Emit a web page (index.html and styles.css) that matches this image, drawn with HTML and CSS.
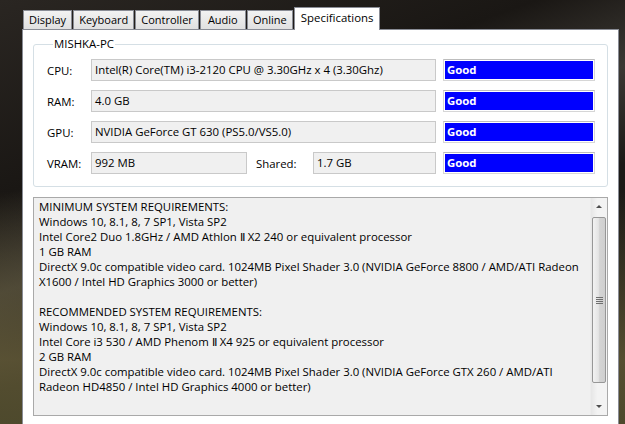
FILE: index.html
```html
<!DOCTYPE html>
<html lang="en">
<head>
  <meta charset="UTF-8" />
  <title>Specifications</title>
  <link rel="stylesheet" href="styles.css">
</head>
<body>

  <div class="window">
    <div class="tabs">
      <div class="tab">Display</div>
      <div class="tab">Keyboard</div>
      <div class="tab">Controller</div>
      <div class="tab">Audio</div>
      <div class="tab">Online</div>
      <div class="tab active">Specifications</div>
    </div>

    <div class="panel">
      <fieldset class="group">
        <legend>MISHKA-PC</legend>

        <div class="row">
          <span class="label">CPU:</span>
          <div class="field wide">Intel(R) Core(TM) i3-2120 CPU @ 3.30GHz x 4 (3.30Ghz)</div>
          <div class="rating">Good</div>
        </div>

        <div class="row">
          <span class="label">RAM:</span>
          <div class="field wide">4.0 GB</div>
          <div class="rating">Good</div>
        </div>

        <div class="row">
          <span class="label">GPU:</span>
          <div class="field wide">NVIDIA GeForce GT 630 (PS5.0/VS5.0)</div>
          <div class="rating">Good</div>
        </div>

        <div class="row">
          <span class="label">VRAM:</span>
          <div class="field vram">992 MB</div>
          <span class="label shared">Shared:</span>
          <div class="field small">1.7 GB</div>
          <div class="rating">Good</div>
        </div>
      </fieldset>

      <div class="textbox">
        <div class="text">
          MINIMUM SYSTEM REQUIREMENTS:<br>
          Windows 10, 8.1, 8, 7 SP1, Vista SP2<br>
          Intel Core2 Duo 1.8GHz / AMD Athlon Ⅱ X2 240 or equivalent processor<br>
          1 GB RAM<br>
          DirectX 9.0c compatible video card. 1024MB Pixel Shader 3.0 (NVIDIA GeForce 8800 / AMD/ATI Radeon<br>
          X1600 / Intel HD Graphics 3000 or better)<br>
          <br>
          RECOMMENDED SYSTEM REQUIREMENTS:<br>
          Windows 10, 8.1, 8, 7 SP1, Vista SP2<br>
          Intel Core i3 530 / AMD Phenom Ⅱ X4 925 or equivalent processor<br>
          2 GB RAM<br>
          DirectX 9.0c compatible video card. 1024MB Pixel Shader 3.0 (NVIDIA GeForce GTX 260 / AMD/ATI<br>
          Radeon HD4850 / Intel HD Graphics 4000 or better)
        </div>
        <div class="scrollbar">
          <div class="arrow up"></div>
          <div class="thumb"><span class="grip"></span></div>
          <div class="arrow down"></div>
        </div>
      </div>
    </div>
  </div>

</body>
</html>
```

FILE: styles.css
```css
* {
  box-sizing: border-box;
}

body {
  margin: 0;
  width: 625px;
  height: 424px;
  overflow: hidden;
  font-family: 'Open Sans', 'Noto Sans', sans-serif;
  font-size: 11.4px;
  color: #000;
  background:
    linear-gradient(180deg, rgba(0,0,0,0) 0%, rgba(0,0,0,0) 45%, rgba(110,100,60,0.7) 85%, rgba(90,85,50,0.8) 100%),
    linear-gradient(160deg, #2a2622 0%, #1a1714 30%, #3b3833 45%, #1c1a17 60%, #1b1a15 100%);
}

.window {
  padding: 7px 6px 0 22px;
}

.tabs {
  display: flex;
  align-items: flex-end;
  gap: 1px;
  height: 22px;
  padding-left: 1px;
}

.tab {
  flex: none;
  min-width: 46px;
  height: 19px;
  line-height: 18px;
  padding: 0 5px;
  border: 1px solid #898c95;
  border-bottom: none;
  background: linear-gradient(#f2f2f2, #e0e0e0);
  font-size: 11px;
  text-align: center;
}

.tab.active {
  height: 23px;
  line-height: 19px;
  margin-bottom: -1px;
  background: #fff;
  position: relative;
  z-index: 1;
  padding: 0 6px;
  font-size: 11.4px;
}

.panel {
  background: #fff;
  border: 1px solid #898c95;
  height: 400px;
  padding: 7px 10px 0 10px;
}

.group {
  margin: 0;
  border: 1px solid #d5dfe5;
  border-radius: 3px;
  padding: 8px 12px 12px 13px;
  display: flex;
  flex-direction: column;
  gap: 9px;
}

.group legend {
  padding: 0 1px;
  margin-left: 6px;
  line-height: 14px;
}

.row {
  display: flex;
  align-items: center;
  height: 22px;
}

.row > * {
  flex: none;
}

.label {
  width: 44px;
}

.label.shared {
  width: 66px;
  padding-left: 9px;
}

.field {
  height: 22px;
  line-height: 20px;
  padding: 0 3px;
  border: 1px solid #c9c9c9;
  background: #f0f0f0;
  white-space: nowrap;
  overflow: hidden;
}

.field.wide {
  width: 345px;
}

.field.vram {
  width: 156px;
}

.field.small {
  width: 123px;
}

.rating {
  margin-left: 7px;
  width: 152px;
  height: 22px;
  line-height: 18px;
  border: 1px solid #d6d6d6;
  border-top-color: #bdbdbd;
  padding: 1px;
  background: #0000ff;
  background-clip: content-box;
  color: #fff;
  font-weight: bold;
  text-indent: 2px;
}

.textbox {
  margin-top: 10px;
  height: 219px;
  border: 1px solid #a9a9a9;
  background: #f0f0f0;
  display: flex;
}

.text {
  flex: 1;
  padding: 1px 0 0 5px;
  line-height: 15px;
  white-space: nowrap;
}

.scrollbar {
  width: 17px;
  display: flex;
  flex-direction: column;
  background: linear-gradient(90deg, #e6e6e6, #f3f3f3 40%, #f3f3f3);
  border-left: 1px solid #ececec;
}

.arrow {
  height: 17px;
  display: flex;
  align-items: center;
  justify-content: center;
}

.arrow::after {
  content: "";
  border-left: 3px solid transparent;
  border-right: 3px solid transparent;
}

.arrow.up::after {
  border-bottom: 3px solid #4d4d4d;
}

.arrow.down::after {
  border-top: 3px solid #4d4d4d;
}

.thumb {
  height: 166px;
  margin: 2px 1px 0 1px;
  border: 1px solid #979797;
  border-radius: 2px;
  background: linear-gradient(90deg, #f2f2f2, #e4e4e4 45%, #d4d4d4 55%, #cfcfcf);
  display: flex;
  align-items: center;
  justify-content: center;
}

.grip {
  width: 7px;
  height: 7px;
  background: repeating-linear-gradient(180deg, #6e6e6e 0 1px, transparent 1px 2px);
}

.thumb + .arrow {
  margin-top: auto;
}
```
